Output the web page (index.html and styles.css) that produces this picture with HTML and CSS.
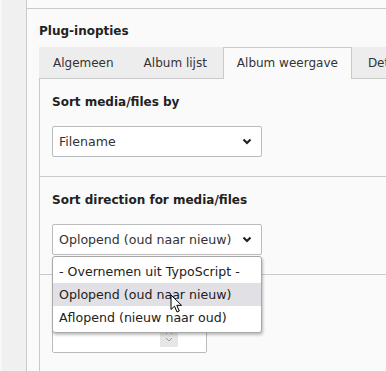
FILE: index.html
```html
<!DOCTYPE html>
<html>
<head>
    <title>Plug-inopties</title>
    <link rel="stylesheet" href="styles.css">
</head>
<body>
    <div class="sidebar"></div>
    <div class="main">
        <div class="topbar"></div>
        <div class="panel">
            <h2 class="title">Plug-inopties</h2>
            <ul class="tabs">
                <li class="tab">Algemeen</li>
                <li class="tab">Album lijst</li>
                <li class="tab active">Album weergave</li>
                <li class="tab">Detail weergave</li>
            </ul>
            <div class="tab-content">
                <div class="form-section">
                    <label class="field-label">Sort media/files by</label>
                    <div class="select">
                        <span>Filename</span>
                        <svg class="chevron" width="10" height="7" viewBox="0 0 10 7"><path d="M1.5 1.5 L5 5 L8.5 1.5" fill="none" stroke="#222" stroke-width="2.2"/></svg>
                    </div>
                </div>
                <div class="form-section">
                    <label class="field-label">Sort direction for media/files</label>
                    <div class="select-wrap">
                        <div class="select">
                            <span>Oplopend (oud naar nieuw)</span>
                            <svg class="chevron" width="10" height="7" viewBox="0 0 10 7"><path d="M1.5 1.5 L5 5 L8.5 1.5" fill="none" stroke="#222" stroke-width="2.2"/></svg>
                        </div>
                        <ul class="dropdown">
                            <li class="option">- Overnemen uit TypoScript -</li>
                            <li class="option hover">Oplopend (oud naar nieuw)
                                <svg class="cursor" width="13" height="20" viewBox="0 0 13 20"><path d="M1 1 L1 15.5 L4.5 12.2 L7 18 L9.3 17 L6.8 11.3 L11.5 11.3 Z" fill="#fff" stroke="#000" stroke-width="1" stroke-linejoin="round"/></svg>
                            </li>
                            <li class="option">Aflopend (nieuw naar oud)</li>
                        </ul>
                    </div>
                </div>
                <div class="form-section">
                    <label class="field-label">Max. aantal items</label>
                    <div class="number-input">
                        <div class="spinner">
                            <svg width="10" height="16" viewBox="0 0 10 16"><path d="M2 6 L5 3 L8 6 M2 10 L5 13 L8 10" fill="none" stroke="#999" stroke-width="1"/></svg>
                        </div>
                    </div>
                </div>
            </div>
        </div>
    </div>
</body>
</html>
```
FILE: styles.css
```css
body{
    margin:0;
    display:flex;
    height:371px;
    overflow:hidden;
    background:#fafafa;
    font-family:"DejaVu Sans", Verdana, sans-serif;
    font-size:12px;
    color:#333;
}
.sidebar{
    width:24px;
    flex-shrink:0;
    background:#f0f0f0;
    border-left:2px solid #f7f7f7;
    border-right:1px solid #cacaca;
}
.main{
    flex:1;
    min-width:0;
    overflow:hidden;
}
.topbar{
    height:8px;
    border-bottom:1px solid #cacaca;
}
.panel{
    padding-left:12px;
}
.title{
    margin:0 0 7px;
    padding-top:13px;
    font-size:12px;
    line-height:18px;
    color:#222;
}
.tabs{
    display:flex;
    margin:0;
    padding:0;
    list-style:none;
    background:#ededed;
    border-bottom:1px solid #cacaca;
    height:31px;
    white-space:nowrap;
}
.tab{
    flex-shrink:0;
    padding:0 13px;
    margin-right:2px;
    line-height:30px;
    border:1px solid transparent;
    border-bottom:0;
    color:#333;
}
.tab.active{
    background:#fafafa;
    border-color:#cacaca;
    height:31px;
}
.tab-content{
    border-left:1px solid #cacaca;
    min-height:300px;
}
.form-section{
    padding:14px 12px 19px;
    border-bottom:1px solid #cacaca;
}
.field-label{
    display:block;
    font-weight:bold;
    line-height:18px;
    margin-bottom:15px;
    color:#222;
}
.select-wrap{
    position:relative;
    width:210px;
}
.select{
    box-sizing:border-box;
    width:210px;
    height:31px;
    display:flex;
    align-items:center;
    justify-content:space-between;
    padding:0 9px 0 6px;
    background:#fff;
    border:1px solid #bbb;
    border-radius:2px;
    color:#333;
    font-size:12.6px;
}
.chevron{
    display:block;
}
.dropdown{
    position:absolute;
    top:32px;
    left:0;
    box-sizing:border-box;
    width:210px;
    margin:0;
    padding:3px 0;
    list-style:none;
    background:#fff;
    border:1px solid #a8a8a8;
    border-radius:3px;
    box-shadow:1px 2px 3px rgba(0,0,0,0.25);
    z-index:2;
}
.option{
    position:relative;
    line-height:23px;
    padding:0 6px;
    color:#222;
    font-size:12.6px;
    white-space:nowrap;
}
.option.hover{
    background:#e1e0e5;
}
.cursor{
    position:absolute;
    left:117px;
    top:11px;
}
.number-input{
    box-sizing:border-box;
    width:155px;
    height:31px;
    display:flex;
    justify-content:flex-end;
    align-items:flex-end;
    padding:0 28px 5px 0;
    background:#fff;
    border:1px solid #bbb;
    border-radius:2px;
}
.spinner{
    width:18px;
    height:22px;
    display:flex;
    align-items:center;
    justify-content:center;
    background:#e6e6e6;
}
```
